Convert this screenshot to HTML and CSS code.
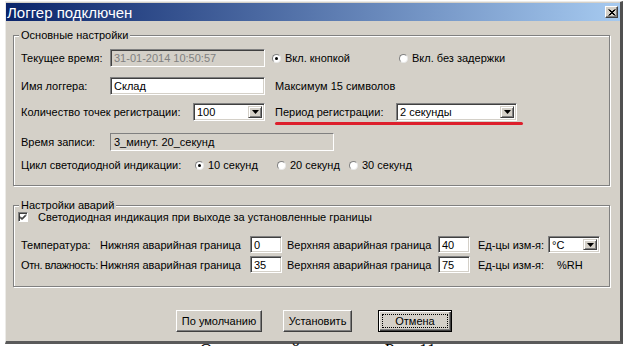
FILE: index.html
```html
<!DOCTYPE html>
<html>
<head>
	<title>Логгер подключен</title>
	<meta charset="utf-8">
	<link rel="stylesheet" href="styles.css">
</head>
<body>
	<div class="window">
		<div class="titlebar">
			<span class="title">Логгер подключен</span>
			<span class="close-btn">
				<svg width="8" height="7" viewBox="0 0 8 7"><path d="M0.5 0.5 L6.5 6.5 M1.5 0.5 L7.5 6.5 M6.5 0.5 L0.5 6.5 M7.5 0.5 L1.5 6.5" stroke="#000" stroke-width="1"/></svg>
			</span>
		</div>

		<div class="content">
			<div class="group group-main">
				<div class="group-title">Основные настройки</div>

				<div class="row row-time">
					<span class="label label-short">Текущее время:</span>
					<span class="edit edit-disabled edit-long">31-01-2014 10:50:57</span>
					<span class="option option-button"><span class="radio checked"></span>Вкл. кнопкой</span>
					<span class="option"><span class="radio"></span>Вкл. без задержки</span>
				</div>

				<div class="row row-name">
					<span class="label label-short">Имя логгера:</span>
					<span class="edit edit-long">Склад</span>
					<span class="note">Максимум 15 символов</span>
				</div>

				<div class="row row-points">
					<span class="label label-wide">Количество точек регистрации:</span>
					<span class="combo combo-points">
						<span class="combo-value">100</span>
						<span class="combo-btn"><svg width="7" height="4" viewBox="0 0 7 4"><path d="M0 0 H7 L3.5 4 Z" fill="#000"/></svg></span>
					</span>
					<span class="marked">
						<span class="label label-period">Период регистрации:</span>
						<span class="combo combo-period">
							<span class="combo-value">2 секунды</span>
							<span class="combo-btn"><svg width="7" height="4" viewBox="0 0 7 4"><path d="M0 0 H7 L3.5 4 Z" fill="#000"/></svg></span>
						</span>
					</span>
				</div>

				<div class="row row-record">
					<span class="label label-short">Время записи:</span>
					<span class="static-box">3_минут. 20_секунд</span>
				</div>

				<div class="row row-led">
					<span class="label label-led">Цикл светодиодной индикации:</span>
					<span class="option option-10"><span class="radio checked"></span>10 секунд</span>
					<span class="option option-20"><span class="radio"></span>20 секунд</span>
					<span class="option"><span class="radio"></span>30 секунд</span>
				</div>
			</div>

			<div class="group group-alarm">
				<div class="group-title">Настройки аварий</div>

				<div class="row row-check">
					<span class="checkbox"><svg width="8" height="8" viewBox="0 0 8 8"><path d="M1 3.5 L3 5.5 L7 1.5 M1 4.5 L3 6.5 L7 2.5" stroke="#000" stroke-width="1" fill="none"/></svg></span>
					<span>Светодиодная индикация при выходе за установленные границы</span>
				</div>

				<div class="row row-limits row-temp">
					<span class="label label-sensor">Температура:</span>
					<span class="label label-low">Нижняя аварийная граница</span>
					<span class="edit edit-small">0</span>
					<span class="label label-high">Верхняя аварийная граница</span>
					<span class="edit edit-small">40</span>
					<span class="label label-unit">Ед-цы изм-я:</span>
					<span class="combo combo-unit">
						<span class="combo-value">°C</span>
						<span class="combo-btn"><svg width="7" height="4" viewBox="0 0 7 4"><path d="M0 0 H7 L3.5 4 Z" fill="#000"/></svg></span>
					</span>
				</div>

				<div class="row row-limits row-hum">
					<span class="label label-sensor label-hum">Отн. влажность:</span>
					<span class="label label-low">Нижняя аварийная граница</span>
					<span class="edit edit-small">35</span>
					<span class="label label-high">Верхняя аварийная граница</span>
					<span class="edit edit-small">75</span>
					<span class="label label-unit">Ед-цы изм-я:</span>
					<span class="unit-text">%RH</span>
				</div>
			</div>

			<div class="buttons">
				<span class="btn btn-reset"><span class="btn-face">По умолчанию</span></span>
				<span class="btn btn-apply"><span class="btn-face">Установить</span></span>
				<span class="btn btn-cancel btn-default"><span class="btn-face">Отмена</span></span>
			</div>
		</div>
	</div>

	<div class="caption">Окно настройки логгера. Рис. 11</div>
</body>
</html>
```

FILE: styles.css
```css
*,*::after,*::before{
	box-sizing: border-box;
	margin: 0;
	padding: 0;
}

body{
	width: 629px;
	height: 346px;
	overflow: hidden;
	background-color: #fff;
	font-family: 'Liberation Sans', Arial, sans-serif;
	font-size: 11px;
	color: #000;
}

.window{
	width: 618px;
	height: 343px;
	margin: 1px 0 0 5px;
	padding-top: 1px;
	display: flex;
	flex-direction: column;
	background-color: #d4d0c8;
	border-style: solid;
	border-width: 1px 3px 3px 1px;
	border-color: #ecebe8 #505050 #5a5a5a #ecebe8;
}

.titlebar{
	height: 18px;
	display: flex;
	align-items: center;
	justify-content: space-between;
	padding: 0 2px 0 1px;
	background: linear-gradient(to right, #0a246a, #a6caf0);
	color: #fff;
	font-size: 15px;
}

.close-btn{
	width: 13px;
	height: 12px;
	display: flex;
	justify-content: center;
	align-items: center;
	background-color: #d4d0c8;
	border: 1px solid;
	border-color: #fff #404040 #404040 #fff;
	box-shadow: inset -1px -1px #808080;
}

.content{
	flex: 1;
	display: flex;
	flex-direction: column;
	padding: 0 10px 0 7px;
}

/* group boxes */
.group{
	border: 1px solid #808080;
	box-shadow: inset 1px 1px #fff, 1px 1px #fff;
	padding: 0 0 11px 7px;
}
.group-main{
	margin-top: 14px;
}
.group-alarm{
	margin-top: 19px;
	padding-bottom: 13px;
}
.group-title{
	display: table;
	margin: -7px 0 0 -2px;
	padding: 0 2px;
	line-height: 13px;
	background-color: #d4d0c8;
}

.row{
	display: flex;
	align-items: center;
	height: 18px;
	white-space: nowrap;
}
.row-time{ margin-top: 7px; }
.row-name{ margin-top: 10px; }
.row-points{ margin-top: 8px; }
.row-record{ margin-top: 12px; }
.row-led{ margin-top: 5px; }

.row-check{
	height: 12px;
	margin-top: -1px;
}
.row-limits{ height: 17px; }
.row-temp{ margin-top: 13px; }
.row-hum{ margin-top: 3px; }

.label{ flex-shrink: 0; }
.label-short{ width: 89px; }
.label-wide{ width: 172px; }
.label-led{ width: 174px; }
.label-period{ width: 121px; }
.label-sensor{ width: 79px; }
.label-hum{ letter-spacing: -0.4px; }
.label-low{ width: 150px; }
.label-high{ width: 151px; margin-left: 5px; }
.label-unit{ width: 70px; margin-left: 8px; }

/* edit boxes */
.edit{
	height: 100%;
	display: flex;
	align-items: center;
	padding: 0 3px;
	background-color: #fff;
	border: 1px solid;
	border-color: #808080 #fff #fff #808080;
	box-shadow: inset 1px 1px #404040, inset -1px -1px #d4d0c8;
}
.edit-long{ width: 155px; }
.edit-small{ width: 32px; }
.edit-disabled{
	background-color: #d4d0c8;
	color: #808080;
}

.static-box{
	width: 224px;
	height: 100%;
	display: flex;
	align-items: center;
	padding: 0 3px;
	border: 1px solid;
	border-color: #808080 #fff #fff #808080;
}

.note{ margin-left: 10px; }

/* combo boxes */
.combo{
	height: 100%;
	display: flex;
	padding: 2px;
	background-color: #fff;
	border: 1px solid;
	border-color: #808080 #fff #fff #808080;
	box-shadow: inset 1px 1px #404040, inset -1px -1px #d4d0c8;
}
.combo-value{
	flex: 1;
	display: flex;
	align-items: center;
	padding-left: 1px;
}
.combo-btn{
	width: 14px;
	display: flex;
	justify-content: center;
	align-items: center;
	background-color: #d4d0c8;
	border: 1px solid;
	border-color: #d4d0c8 #404040 #404040 #d4d0c8;
	box-shadow: inset 1px 1px #fff, inset -1px -1px #808080;
}
.combo-points{ width: 72px; }
.combo-period{ width: 121px; }
.combo-unit{ width: 52px; }

/* red annotation under the period */
.marked{
	position: relative;
	display: flex;
	align-items: center;
	height: 100%;
	margin-left: 10px;
}
.marked::after{
	content: '';
	position: absolute;
	left: 0;
	right: -6px;
	bottom: -4px;
	height: 3px;
	border-radius: 2px;
	background-color: #dd1f2c;
}

/* radios and check */
.option{
	display: flex;
	align-items: center;
	flex-shrink: 0;
}
.option-button{
	width: 127px;
	margin-left: 7px;
}
.option-10{ width: 82px; }
.option-20{ width: 72px; }

.radio{
	width: 9px;
	height: 9px;
	margin-right: 4px;
	display: flex;
	justify-content: center;
	align-items: center;
	border-radius: 50%;
	background-color: #fff;
	border: 1px solid;
	border-color: #808080 #e8e8e8 #e8e8e8 #808080;
}
.radio.checked::before{
	content: '';
	width: 3px;
	height: 3px;
	border-radius: 50%;
	background-color: #000;
}

.checkbox{
	width: 10px;
	height: 10px;
	margin: 0 10px 0 -3px;
	display: flex;
	justify-content: center;
	align-items: center;
	background-color: #fff;
	border: 1px solid;
	border-color: #808080 #fff #fff #808080;
	box-shadow: inset 1px 1px #404040;
}

.unit-text{ padding-left: 9px; }

/* bottom buttons */
.buttons{
	display: flex;
	justify-content: center;
	margin-top: 23px;
	padding-left: 5px;
}
.btn{
	height: 22px;
	display: flex;
	padding: 3px;
	background-color: #d4d0c8;
	border: 1px solid;
	border-color: #fff #404040 #404040 #fff;
	box-shadow: inset -1px -1px #808080;
}
.btn-face{
	flex: 1;
	display: flex;
	justify-content: center;
	align-items: center;
	border: 1px dotted transparent;
}
.btn-reset{ width: 86px; }
.btn-apply{ width: 69px; margin-left: 21px; }
.btn-cancel{ width: 74px; margin-left: 26px; }

.btn-default{
	border-color: #000;
	box-shadow: inset 1px 1px #fff, inset -1px -1px #404040, inset -2px -2px #808080;
}
.btn-default .btn-face{
	border-color: #000;
}

.caption{
	margin-top: -1px;
	padding-left: 200px;
	font-family: 'Liberation Serif', serif;
	font-size: 17px;
	line-height: 14px;
}
```
